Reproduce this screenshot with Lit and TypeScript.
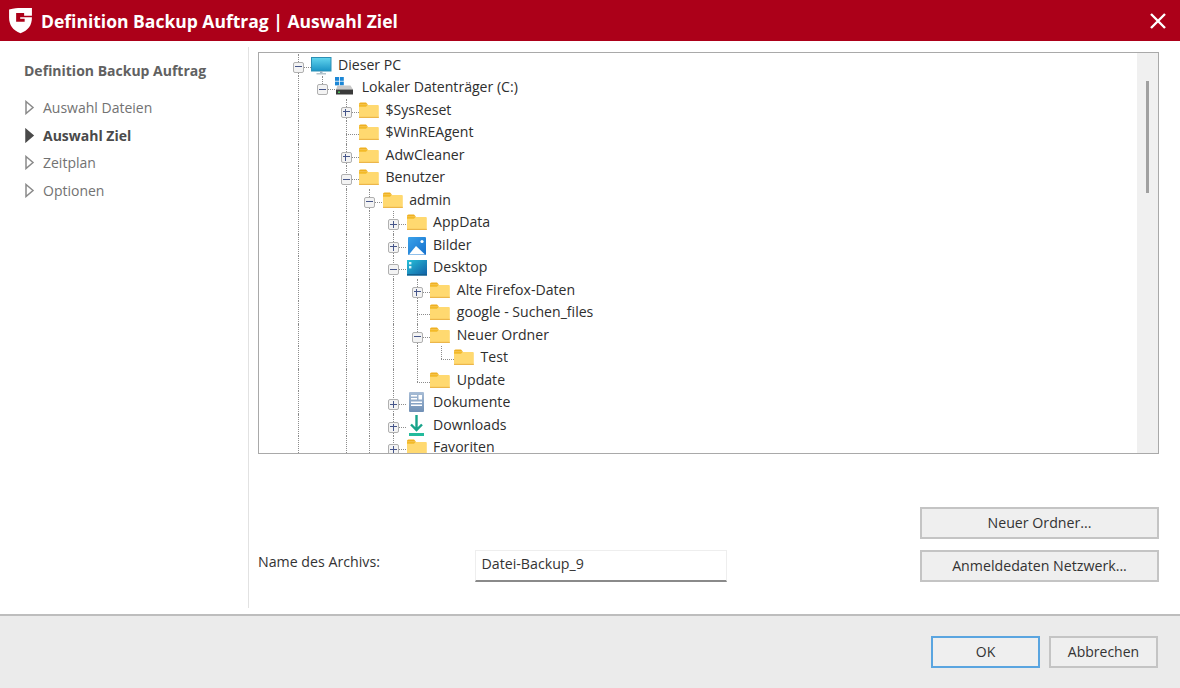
import { LitElement, html, css, svg } from "lit";
import { customElement } from "lit/decorators.js";

type Icon = "pc" | "drive" | "folder" | "pics" | "desk" | "docs" | "down";
interface Row { label: string; level: number; icon: Icon; exp?: "+" | "-"; guides: number[]; last?: boolean; }

const X0 = 39; // expander centre of level 0, inside the tree box
const STEP = 23.75;

const rows: Row[] = [
  { label: "Dieser PC", level: 0, icon: "pc", exp: "-", guides: [0] },
  { label: "Lokaler Datenträger (C:)", level: 1, icon: "drive", exp: "-", guides: [0] },
  { label: "$SysReset", level: 2, icon: "folder", exp: "+", guides: [0, 2] },
  { label: "$WinREAgent", level: 2, icon: "folder", guides: [0, 2] },
  { label: "AdwCleaner", level: 2, icon: "folder", exp: "+", guides: [0, 2] },
  { label: "Benutzer", level: 2, icon: "folder", exp: "-", guides: [0, 2] },
  { label: "admin", level: 3, icon: "folder", exp: "-", guides: [0, 2, 3] },
  { label: "AppData", level: 4, icon: "folder", exp: "+", guides: [0, 2, 3, 4] },
  { label: "Bilder", level: 4, icon: "pics", exp: "+", guides: [0, 2, 3, 4] },
  { label: "Desktop", level: 4, icon: "desk", exp: "-", guides: [0, 2, 3, 4] },
  { label: "Alte Firefox-Daten", level: 5, icon: "folder", exp: "+", guides: [0, 2, 3, 4, 5] },
  { label: "google - Suchen_files", level: 5, icon: "folder", guides: [0, 2, 3, 4, 5] },
  { label: "Neuer Ordner", level: 5, icon: "folder", exp: "-", guides: [0, 2, 3, 4, 5] },
  { label: "Test", level: 6, icon: "folder", guides: [0, 2, 3, 4, 5], last: true },
  { label: "Update", level: 5, icon: "folder", guides: [0, 2, 3, 4], last: true },
  { label: "Dokumente", level: 4, icon: "docs", exp: "+", guides: [0, 2, 3, 4] },
  { label: "Downloads", level: 4, icon: "down", exp: "+", guides: [0, 2, 3, 4] },
  { label: "Favoriten", level: 4, icon: "folder", exp: "+", guides: [0, 2, 3, 4] },
];

// icon offset from the row's expander centre (x) and row top (y)
const offs: Record<Icon, [number, number]> = {
  folder: [13.5, 2],
  pc: [13, 3],
  drive: [13, 1],
  pics: [15, 3],
  desk: [14, 4],
  docs: [16, 1],
  down: [16, 1],
};

const icons: Record<Icon, unknown> = {
  folder: svg`<svg class="ico" width="20" height="18" viewBox="0 0 20 18">
    <path d="M0 3a1.500 1.500 0 0 1 1.500-1.500H7l2 2.200H0z" fill="#efb020"/>
    <path d="M0 4h18.800a1 1 0 0 1 1 1V16a1 1 0 0 1-1 1H1a1 1 0 0 1-1-1z" fill="#ffd970"/>
    <path d="M0 3.700h8.800L7 5.700H0z" fill="#f3ba28"/>
    <path d="M0 15.800h19.800V17H0z" fill="#ecb64a"/></svg>`,
  pc: svg`<svg class="ico" width="21" height="18" viewBox="0 0 21 18">
    <defs><linearGradient id="pcg" x1="0" y1="0" x2="0" y2="1"><stop offset="0" stop-color="#63d6ee"/><stop offset="1" stop-color="#1a94c6"/></linearGradient></defs>
    <rect x="0.500" y="0.500" width="19.500" height="13.500" fill="url(#pcg)" stroke="#2c8fb5" stroke-width="1"/>
    <rect x="9" y="14" width="2.500" height="2.500" fill="#9db6c4"/>
    <rect x="5.500" y="16" width="9.500" height="1.500" fill="#b4c4cc"/></svg>`,
  drive: svg`<svg class="ico" width="20" height="19" viewBox="0 0 20 19">
    <rect x="0" y="0" width="4" height="3.800" fill="#1c87d6"/><rect x="4.800" y="0" width="4" height="3.800" fill="#1c87d6"/>
    <rect x="0" y="4.600" width="4" height="3.800" fill="#1c87d6"/><rect x="4.800" y="4.600" width="4" height="3.800" fill="#1c87d6"/>
    <path d="M2.500 8.500h13l2.500 4H1z" fill="#c8c8c8"/>
    <rect x="1" y="12.500" width="17" height="5" fill="#3a3a3a"/>
    <rect x="3" y="14.500" width="2" height="1.500" fill="#4fc45a"/></svg>`,
  pics: svg`<svg class="ico" width="18" height="18" viewBox="0 0 18 18">
    <defs><linearGradient id="pg" x1="0" y1="0" x2="1" y2="1"><stop offset="0" stop-color="#3aa2ea"/><stop offset="1" stop-color="#1670cc"/></linearGradient></defs>
    <rect width="18" height="18" rx="1" fill="url(#pg)"/>
    <circle cx="14" cy="4.500" r="1.600" fill="#fff"/>
    <path d="M1 17.500L8 9l9 8.500z" fill="#fff"/></svg>`,
  desk: svg`<svg class="ico" width="20" height="16" viewBox="0 0 20 16">
    <defs><linearGradient id="dk" x1="0" y1="0" x2="1" y2="1"><stop offset="0" stop-color="#27c0d8"/><stop offset="1" stop-color="#115ea6"/></linearGradient></defs>
    <rect width="20" height="15.500" fill="url(#dk)"/>
    <rect x="2" y="2" width="2.400" height="2.400" fill="#d9f4fa"/><rect x="2" y="6" width="2.400" height="2.400" fill="#d9f4fa"/>
    <rect x="0" y="14" width="20" height="1.500" fill="#12608f"/></svg>`,
  docs: svg`<svg class="ico" width="15" height="20" viewBox="0 0 15 20">
    <defs><linearGradient id="dc" x1="0" y1="0" x2="0" y2="1"><stop offset="0" stop-color="#a8bdd6"/><stop offset="1" stop-color="#6f8fb5"/></linearGradient></defs>
    <rect width="15" height="20" rx="1" fill="url(#dc)"/>
    <rect x="2" y="3" width="6" height="1.500" fill="#fff"/><rect x="2" y="6" width="6" height="1.500" fill="#fff"/>
    <rect x="9.500" y="3" width="3.500" height="4.500" fill="#fff"/>
    <rect x="2" y="9.500" width="11" height="1.500" fill="#fff"/><rect x="2" y="12.500" width="11" height="1.500" fill="#fff"/></svg>`,
  down: svg`<svg class="ico" width="16" height="22" viewBox="0 0 16 22">
    <path d="M7.500 0v14.500M2 9.500l5.500 5.500 5.500-5.500" fill="none" stroke="#18a38a" stroke-width="2.400"/>
    <rect x="0" y="18" width="15" height="3" fill="#22bb9c"/></svg>`,
};

@customElement("app-root")
export class AppRoot extends LitElement {
  static styles = css`
    :host { display: flex; flex-direction: column; width: 1180px; height: 688px; overflow: hidden; background: #fff;
      font-family: "Open Sans", "Noto Sans", sans-serif; font-size: 14px; color: #2b2b2b; }
    .title { height: 41px; flex: none; background: #ac0019; color: #fff; display: flex; align-items: center; padding: 0 13px 0 8px; gap: 8px;
      font-size: 17.5px; font-weight: 700; }
    .title .grow { flex: 1; }
    .body { flex: 1; display: flex; min-height: 0; }
    .side { width: 249px; flex: none; box-sizing: border-box; margin-top: 6px; margin-bottom: 6px; border-right: 1px solid #e2e2e2; padding: 14px 0 0 24px; }
    .side h2 { margin: 0 0 13px; font-size: 14px; line-height: 20px; font-weight: 700; color: #616161; }
    .step { display: flex; align-items: center; gap: 8px; height: 27.5px; color: #727272; }
    .step.on { color: #4a4a4a; font-weight: 700; }
    .step svg { flex: none; }
    .main { flex: 1; display: flex; flex-direction: column; padding: 11px 21px 0 9px; min-width: 0; }
    .tree { height: 402px; flex: none; box-sizing: border-box; border: 1px solid #a9a9a9; display: flex; overflow: hidden; }
    .rows { flex: 1; overflow: hidden; padding-top: 0.5px; font-size: 14.1px; }
    .row { position: relative; height: 22.5px; }
    .lab { position: absolute; top: 1px; line-height: 20px; color: #2e2e2e; white-space: nowrap; }
    .iw { position: absolute; display: block; }
    .ico { display: block; }
    .g { position: absolute; width: 0; border-left: 1px dotted #8c8c8c; }
    .h { position: absolute; height: 0; border-top: 1px dotted #8c8c8c; }
    .exp { position: absolute; width: 11px; height: 11px; box-sizing: border-box; border: 1.5px solid #b0b0b0; border-radius: 2px; background: #f3f3f3; }
    .exp::before { content: ""; position: absolute; left: 1px; right: 1px; top: 3.5px; height: 1px; background: #46568a; }
    .exp.plus::after { content: ""; position: absolute; top: 1px; bottom: 1px; left: 3.5px; width: 1px; background: #46568a; }
    .sb { width: 21px; flex: none; background: #f0f0f0; position: relative; }
    .thumb { position: absolute; left: 9px; top: 28px; width: 3px; height: 112px; background: #a0a0a0; }
    .lower { flex: 1; display: flex; justify-content: space-between; align-items: flex-start; padding-top: 53px; font-size: 14.2px; }
    .form { display: flex; align-items: flex-start; padding-top: 43px; }
    .form label { width: 217px; line-height: 20px; margin-top: 2px; color: #333; }
    .input { width: 252px; height: 32px; box-sizing: border-box; border: 1px solid #eee; border-bottom: 2px solid #8a8a8a; padding: 3px 5.5px; line-height: 20px; color: #333; }
    .btns { display: flex; flex-direction: column; gap: 11px; }
    .btn { box-sizing: border-box; display: flex; align-items: center; justify-content: center; background: #efefef; border: 2px solid #c4c4c4; color: #333; padding-bottom: 1px; }
    .btns .btn { width: 239px; height: 32px; }
    .foot { height: 74px; flex: none; box-sizing: border-box; background: #ebebeb; border-top: 2px solid #bdbdbd; display: flex; justify-content: flex-end; align-items: flex-start; gap: 9px; padding: 20px 22px 0 0; }
    .foot .btn { width: 109px; height: 32px; }
    .foot .ok { border: 2px solid #5aa5e0; }
  `;

  private tri(filled: boolean) {
    return html`<svg width="11" height="15" viewBox="0 0 11 15"><path d="M2 1.500L9 7.500L2 13.500z" fill=${filled ? "#4a4a4a" : "#fff"} stroke=${filled ? "#4a4a4a" : "#8a8a8a"} stroke-width="1.500"/></svg>`;
  }

  private row(r: Row) {
    const cx = X0 + r.level * STEP;
    const mid = 13;
    const [ox, oy] = offs[r.icon];
    return html`<div class="row">
      ${r.guides.map((g) => {
        const x = X0 + g * STEP;
        const ends = r.last && g === r.level;
        return html`<span class="g" style="left:${x}px;top:0;height:${ends ? mid : 22.5}px"></span>`;
      })}
      ${r.last ? html`<span class="g" style="left:${cx}px;top:0;height:${mid}px"></span>` : ""}
      ${r.level === 1 ? html`<span class="g" style="left:${cx}px;top:0;height:8px"></span>` : ""}
      <span class="h" style="left:${r.exp ? cx + 6 : cx}px;top:${mid}px;width:${r.exp ? 7 : 13}px"></span>
      ${r.exp ? html`<span class="exp ${r.exp === "+" ? "plus" : ""}" style="left:${cx - 5}px;top:${mid - 5}px"></span>` : ""}
      <span class="iw" style="left:${cx + ox}px;top:${oy}px">${icons[r.icon]}</span>
      <span class="lab" style="left:${cx + 40}px">${r.label}</span>
    </div>`;
  }

  render() {
    const steps = [["Auswahl Dateien", false], ["Auswahl Ziel", true], ["Zeitplan", false], ["Optionen", false]] as const;
    return html`
      <div class="title">
        <svg width="25" height="27" viewBox="0 0 24 26"><path d="M1 2.500C6 1 9 1 12 1h11v7.500h-7.500V5.800H7.800v8.400h8.200v-2.800h-4.300V9.800H23c0 8-3.500 12.500-11 15.500C4.500 22.300 1 17 1 10z" fill="#fff"/></svg>
        <span>Definition Backup Auftrag | Auswahl Ziel</span>
        <span class="grow"></span>
        <svg width="18" height="18" viewBox="0 0 18 18"><path d="M2 2L16 16M16 2L2 16" stroke="#fff" stroke-width="2.400" fill="none"/></svg>
      </div>
      <div class="body">
        <div class="side">
          <h2>Definition Backup Auftrag</h2>
          ${steps.map(([t, on]) => html`<div class="step ${on ? "on" : ""}">${this.tri(on)}<span>${t}</span></div>`)}
        </div>
        <div class="main">
          <div class="tree">
            <div class="rows">${rows.map((r) => this.row(r))}</div>
            <div class="sb"><div class="thumb"></div></div>
          </div>
          <div class="lower">
            <div class="form"><label>Name des Archivs:</label><div class="input">Datei-Backup_9</div></div>
            <div class="btns"><div class="btn">Neuer Ordner...</div><div class="btn">Anmeldedaten Netzwerk...</div></div>
          </div>
        </div>
      </div>
      <div class="foot"><div class="btn ok">OK</div><div class="btn">Abbrechen</div></div>
    `;
  }
}
